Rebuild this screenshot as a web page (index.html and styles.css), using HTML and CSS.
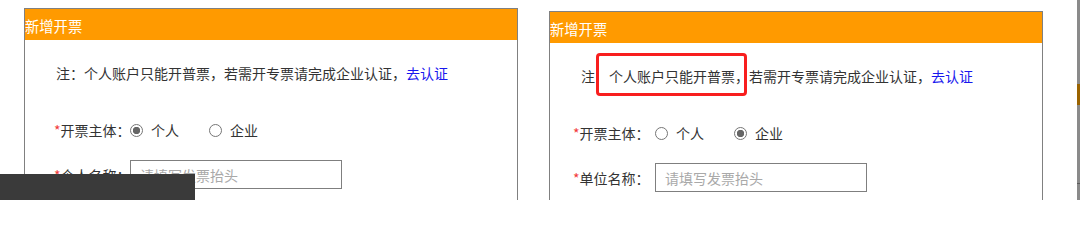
FILE: index.html
```html
<!DOCTYPE html>
<html lang="zh-CN">
<head>
<meta charset="utf-8">
<title>新增开票</title>
<link rel="stylesheet" href="styles.css">
</head>
<body>
<div class="page">
  <section class="panel panel--a">
    <div class="panel-head">新增开票</div>
    <p class="note">注：个人账户只能开普票，若需开专票请完成企业认证，<a class="link">去认证</a></p>
    <div class="row row--radio">
      <span class="label"><i class="req">*</i>开票主体：</span>
      <label class="opt"><input type="radio" name="a" checked><span>个人</span></label>
      <label class="opt"><input type="radio" name="a"><span>企业</span></label>
    </div>
    <div class="row row--input">
      <span class="label"><i class="req">*</i>个人名称：</span>
      <input class="field" type="text" placeholder="请填写发票抬头">
    </div>
  </section>

  <section class="panel panel--b">
    <div class="panel-head">新增开票</div>
    <p class="note">注<span class="hl">个人账户只能开普票，</span>若需开专票请完成企业认证，<a class="link">去认证</a></p>
    <div class="row row--radio">
      <span class="label"><i class="req">*</i>开票主体：</span>
      <label class="opt"><input type="radio" name="b"><span>个人</span></label>
      <label class="opt"><input type="radio" name="b" checked><span>企业</span></label>
    </div>
    <div class="row row--input">
      <span class="label"><i class="req">*</i>单位名称：</span>
      <input class="field" type="text" placeholder="请填写发票抬头">
    </div>
  </section>

  <div class="edge"></div>

  <div class="dock"></div>
</div>
</body>
</html>
```

FILE: styles.css
```css
html, body {
  margin: 0;
  height: 200px;
  overflow: hidden;
  background: #fff;
}

body {
  font-family: "Noto Sans CJK SC", "Noto Sans", sans-serif;
  color: #333;
}

.page {
  position: relative;
  display: flex;
  align-items: flex-start;
  width: 1080px;
  height: 200px;
}

.panel {
  box-sizing: border-box;
  width: 494px;
  height: 240px;
  flex: none;
  border: 1px solid #808080;
  border-bottom: 0;
  background: #fff;
}

.panel--a {
  margin: 8px 0 0 24px;
}

.panel--b {
  margin: 11px 0 0 31px;
}

.panel-head {
  box-sizing: border-box;
  height: 31px;
  padding-top: 3px;
  background: #ff9a00;
  color: #fff;
  font-size: 14.3px;
  line-height: 28px;
}

.note {
  margin: 23px 0 0;
  padding-left: 31px;
  font-size: 14px;
  line-height: 20px;
  white-space: nowrap;
}

.link {
  color: #1717ee;
  text-decoration: none;
}

.hl {
  position: relative;
  margin-left: 14px;
}

.hl::before {
  content: "";
  position: absolute;
  left: -13px;
  right: 2px;
  top: -13px;
  bottom: -10px;
  border: 3px solid #f81e1e;
  border-radius: 4px;
}

.row {
  display: flex;
  align-items: center;
}

.row--radio {
  margin-top: 37px;
  height: 20px;
}

.row--input {
  margin-top: 20px;
  height: 29px;
}

.panel--a .row {
  padding-left: 29px;
}

.panel--a .label {
  width: 76px;
}

.panel--b .row {
  padding-left: 23px;
}

.panel--b .label {
  width: 82px;
}

.label {
  flex: none;
  box-sizing: border-box;
  font-size: 14px;
  line-height: 20px;
  white-space: nowrap;
}

.req {
  color: #f23a3a;
  font-style: normal;
}

.opt {
  display: flex;
  align-items: center;
  margin-right: 30px;
  font-size: 14px;
  line-height: 20px;
}

.opt input {
  appearance: none;
  -webkit-appearance: none;
  box-sizing: border-box;
  width: 13px;
  height: 13px;
  margin: 0 8px 0 0;
  border: 1px solid #767676;
  border-radius: 50%;
  background: #fff;
}

.opt input:checked {
  background: radial-gradient(circle, #666 0 3.4px, #fff 4px);
}

.field {
  box-sizing: border-box;
  width: 212px;
  height: 29px;
  margin: 0;
  padding: 0 9px;
  border: 1px solid #7f7f7f;
  font-family: "Noto Sans CJK SC", "Noto Sans", sans-serif;
  font-size: 14px;
  color: #333;
  outline: none;
}

.field::placeholder {
  color: #a9a9a9;
}

.edge {
  flex: none;
  width: 3px;
  height: 200px;
  margin-left: 34px;
  background: linear-gradient(to bottom,
    #8a8a8a 0 84px,
    #9a6300 84px 105px,
    #8a8a8a 105px 183px,
    #5c5c5c 183px 184px,
    #8a8a8a 184px);
}

.dock {
  position: absolute;
  left: 0;
  top: 174px;
  width: 195px;
  height: 26px;
  background: #3a3a3a;
}
```
